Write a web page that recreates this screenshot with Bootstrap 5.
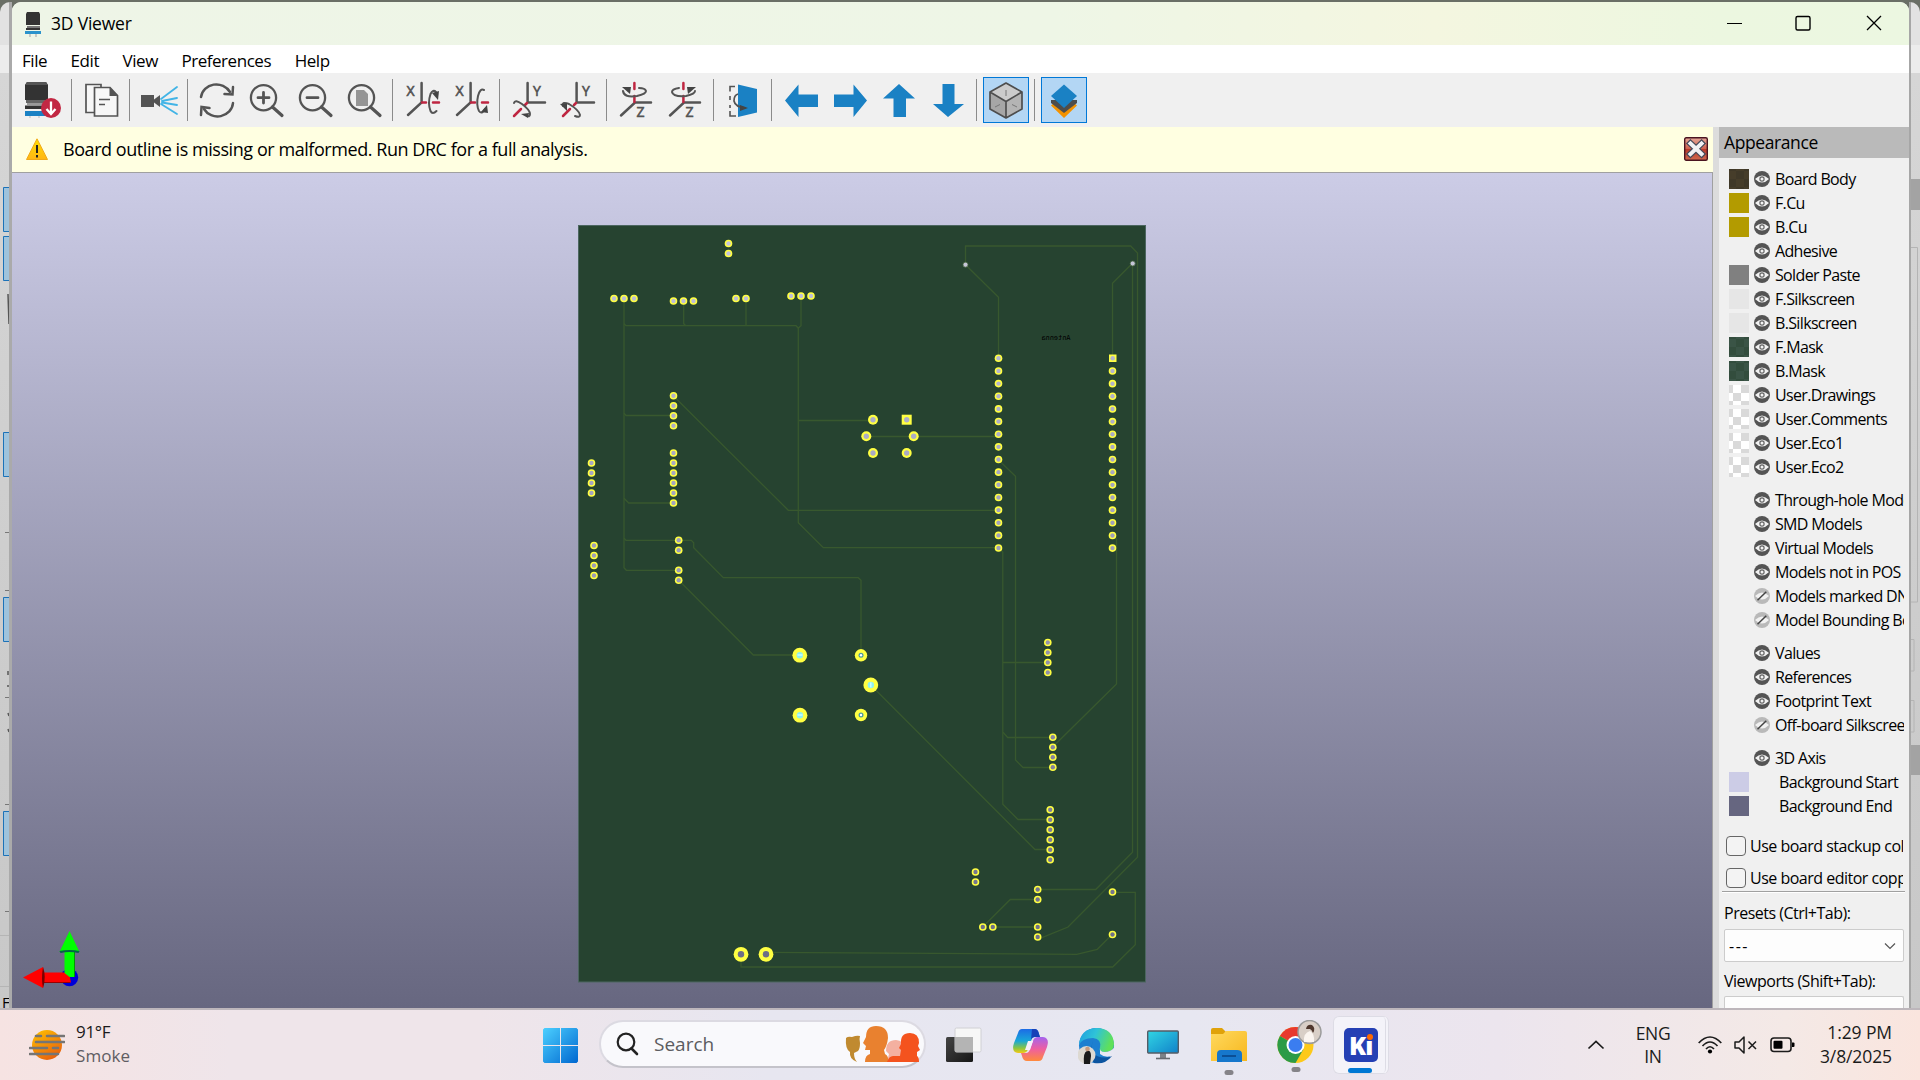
<!DOCTYPE html>
<html lang="en">
<head>
<meta charset="utf-8">
<title>3D Viewer</title>
<link href="https://cdn.jsdelivr.net/npm/bootstrap@5.3.0/dist/css/bootstrap.min.css" rel="stylesheet">
<style>
  body { width: 1920px; height: 1080px; overflow: hidden; background: #6a6f66; color: #000;
         font-family: "Open Sans", "Noto Sans", sans-serif; font-size: 17px; letter-spacing: -.45px; line-height: 1; white-space: nowrap; }
  svg { display: block; flex: none; }
  .desk { height: 1008px; padding-top: 2px; overflow: hidden; }
  .edge { flex: none; background: linear-gradient(#e2e2e2 43px, #ececec 43px 71px, #d6d6d6 71px, #cdcdcd 60%, #c8c8c8); }
  .edge-l { width: 12px; border-radius: 10px 0 0 0; border-right: 3px solid #aaa; }
  .edge-r { width: 11px; border-radius: 0 10px 0 0; border-left: 2px solid #a6a6a6; }
  .win { width: 1897px; flex: none; background: #f0f0f0; border-radius: 9px 9px 0 0; overflow: hidden; }
  .win > div { flex: none; }
  .titlebar { height: 43px; padding-left: 13px; background: linear-gradient(90deg, #eef5e7, #eef6e6 55%, #f4f6e0 75%, #ecf7e0 90%, #ecf7e1); }
  .win-title { margin-left: 8px; font-size: 17.5px; letter-spacing: -.2px; }
  .caption-btn { width: 70px; }
  .menubar { height: 28px; background: #fff; padding-left: 10px; gap: 23.5px; }
  .menubar span { position: relative; top: 1px; }
  .toolbar { height: 54px; padding-left: 6px; }
  .toolbar svg { overflow: visible; }
  .tool { width: 49px; height: 54px; flex: none; }
  .tool-on > span { width: 46px; height: 46px; background: #b3d6f4; border: 1px solid #0078d7; }
  .tool-sep { width: 9px; height: 54px; flex: none; }
  .tool-sep::before { content: ""; width: 1px; height: 42px; background: #8b8b8b; }
  .infobar { height: 45px; background: #ffffe1; padding: 0 5px 1px 14px; font-size: 18px; letter-spacing: -.44px; }
  .infobar .msg { margin-left: 15px; }
  .scene { width: 1701px; border-right: 1px solid #a0a0a0; border-top: 1px solid #a0a0a0; height: 836px; }
  .sash { width: 6px; background: #dcdcdc; }
  .side { width: 190px; font-size: 16px; letter-spacing: -.5px; }
  .side-head { height: 31px; background: #bababa; padding-left: 5px; font-size: 17.5px; letter-spacing: -.4px; }
  .layers { padding: 9px 0 0 10px; width: 185px; overflow: hidden; letter-spacing: -.65px; }
  .lay { height: 24px; }
  .lay + .lay-gap { margin-top: 9px; }
  .sw { width: 20px; height: 20px; margin-right: 5px; flex: none; }
  .sw-check { background: conic-gradient(#fff 25%, #d9d9d9 0 50%, #fff 0 75%, #d9d9d9 0) -4px 0/16px 16px; }
  .sw-brown { background: conic-gradient(#3f3828 25%, #463d2a 0 50%, #3f3828 0 75%, #463d2a 0) -1px 2px/16px 16px; }
  .sw-green { background: conic-gradient(#334d3d 25%, #3a5446 0 50%, #334d3d 0 75%, #3a5446 0) -1px 2px/16px 16px; }
  .chk { height: 32px; padding-left: 7px; width: 184px; overflow: hidden; }
  .chk .form-check-input { width: 20px; height: 20px; border: 1px solid #666; border-radius: 4px; margin: 0 4px 0 0; flex: none; background: #f3f3f3; }
  .rule { height: 2px; margin: -3px 4px 0 3px; background: #a0a0a0; border-bottom: 1px solid #fff; }
  .combo { width: 180px; height: 33px; margin-left: 5px; background: #fdfdfd; border: 1px solid #ccc; border-radius: 2px; padding: 0 7px 0 4px; }
  .taskbar { height: 72px; border-top: 2px solid #bdb6bb; letter-spacing: -.3px; color: #1b1b1b;
             background: linear-gradient(90deg, #f6e3e2 0, #efe5ea 12%, #efe5ea 25%, #e7e6f0 40%, #e7e7f1 62%, #ece5ee 78%, #f4e9e6 93%, #fae5de 100%); }
  .search { width: 327px; flex: none; height: 48px; border-radius: 24px; background: #f9f9fc; border: 2px solid #dcdae2; border-bottom-color: #c4c3ca; padding: 0 3px 0 14px; }
  .ki-tile { width: 56px; height: 58px; flex: none; border-radius: 6px; background: #f4f3f9; border: 1px solid #dddce5; border-right: 4px double #dddce5; position: relative; }
  .pip { width: 9px; height: 5px; border-radius: 3px; background: #858388; left: 50%; transform: translateX(-50%); bottom: -13px; }
  .pip-on { width: 24px; background: #0078d4; bottom: 0; }
  .tray-col { line-height: 24px; font-size: 17px; flex: none; }
</style>
<script src="https://cdn.jsdelivr.net/npm/bootstrap@5.3.0/dist/js/bootstrap.bundle.min.js"></script>
</head>
<body>
<svg width="0" height="0" class="position-absolute">
  <defs>
    <symbol id="eye" viewBox="0 0 16 16"><circle cx="8" cy="8" r="8" fill="#545454"/><path d="M1 8Q8 .8 15 8Q8 15.2 1 8z" fill="#f2f2f2"/><circle cx="8" cy="8" r="2.1" fill="none" stroke="#666" stroke-width="1.2"/></symbol>
    <symbol id="noeye" viewBox="0 0 16 16"><circle cx="8" cy="8" r="8" fill="#b9b9b9"/><path d="M1 8Q8 .8 15 8Q8 15.2 1 8z" fill="#f2f2f2"/><path d="M3.5 12.3L12.3 3.7" stroke="#444" stroke-width="1.5"/></symbol>
    <linearGradient id="bg" gradientUnits="userSpaceOnUse" x1="0" y1="173" x2="0" y2="1008"><stop offset="0" stop-color="#cccce6"/><stop offset="1" stop-color="#676780"/></linearGradient>
    <linearGradient id="winblue" x1="0" y1="0" x2="1" y2="1"><stop offset="0" stop-color="#4cd0ff"/><stop offset="1" stop-color="#0067d0"/></linearGradient>
    <linearGradient id="sun" x1="0" y1="0" x2=".6" y2="1"><stop offset="0" stop-color="#ffc400"/><stop offset="1" stop-color="#e9630c"/></linearGradient>
    <linearGradient id="amber" x1="0" y1="0" x2="0" y2="1"><stop offset="0" stop-color="#ffe000"/><stop offset="1" stop-color="#ffb515"/></linearGradient>
    <linearGradient id="cpA" x1="0" y1="0" x2="0" y2="1"><stop offset="0" stop-color="#1c6be6"/><stop offset=".5" stop-color="#19a8d8"/><stop offset=".8" stop-color="#8cc63f"/><stop offset="1" stop-color="#f6c915"/></linearGradient>
    <linearGradient id="cpB" x1="0" y1="0" x2="0" y2="1"><stop offset="0" stop-color="#a463ee"/><stop offset=".5" stop-color="#ee5fa0"/><stop offset="1" stop-color="#ff8a3c"/></linearGradient>
    <linearGradient id="edA" x1="0" y1="0" x2="1" y2=".3"><stop offset="0" stop-color="#1c9de0"/><stop offset=".5" stop-color="#2fc3d8"/><stop offset="1" stop-color="#5fe05a"/></linearGradient>
    <linearGradient id="scr" x1="0" y1="0" x2="1" y2="1"><stop offset="0" stop-color="#31d6e4"/><stop offset="1" stop-color="#1181c9"/></linearGradient>
    <linearGradient id="fold" x1="0" y1="0" x2="1" y2="1"><stop offset="0" stop-color="#ffd95e"/><stop offset="1" stop-color="#f7b71d"/></linearGradient>
    <linearGradient id="tvA" x1="0" y1="0" x2="1" y2="1"><stop offset="0" stop-color="#444"/><stop offset="1" stop-color="#161616"/></linearGradient>
    <linearGradient id="closeRed" x1="0" y1="0" x2="0" y2="1"><stop offset="0" stop-color="#e6a99a"/><stop offset=".5" stop-color="#cf5f4c"/><stop offset=".51" stop-color="#b8392a"/><stop offset="1" stop-color="#d06a50"/></linearGradient>
  </defs>
</svg>

<div class="desk d-flex">
  <div class="edge edge-l">
    <svg width="9" height="1006" viewBox="0 2 9 1006">
      <g fill="#9fc3dc" stroke="#1c72b8"><path d="M10 187.5H3.5v44H10zM10 236.5H3.5v44H10zM10 432.5H3.5v44H10zM10 597.5H3.5v44H10zM10 811.5H3.5v44H10z"/></g>
      <path d="M5 532.5h4M5 590.5h4M5 697.5h4M5 804.5h4M5 911.5h4" stroke="#777"/><path d="M0 935.5h9M0 986.5h9" stroke="#b5b5b5"/>
      <path d="M8 294l1 30M8 671v4M8 685v2M8 713l1 3M8 729l1 3" stroke="#555" stroke-width="1.5"/>
      <text x="2" y="1008" font-size="15" letter-spacing="0">F</text>
    </svg>
  </div>

  <div class="win d-flex flex-column">
    <div class="titlebar d-flex align-items-center">
      <svg width="18" height="26" viewBox="0 0 18 26"><path d="M2 1h12l1 2v11H1V3z" fill="#333"/><path d="M2 15h13v2H2z" fill="#777"/><path d="M1 17h14v2H1z" fill="#333"/><path d="M0 20h16v3H0z" fill="#2b93cc"/><path d="M5 23v3M11 23v3" stroke="#bbb" stroke-width="1.5"/></svg>
      <span class="win-title">3D Viewer</span>
      <div class="ms-auto d-flex">
        <svg class="caption-btn" height="20" viewBox="0 0 70 20"><path d="M28 9.5h15" stroke="#000" stroke-width="1.2"/></svg>
        <svg class="caption-btn" height="20" viewBox="0 0 70 20"><rect x="27" y="2.5" width="14" height="13.5" rx="1.5" fill="none" stroke="#000" stroke-width="1.4"/></svg>
        <svg class="caption-btn" height="20" viewBox="0 0 70 20"><path d="M28 2l14 14M42 2L28 16" stroke="#000" stroke-width="1.3"/></svg>
      </div>
    </div>

    <div class="menubar d-flex align-items-center"><span>File</span><span>Edit</span><span>View</span><span>Preferences</span><span>Help</span></div>

    <div class="toolbar d-flex align-items-center" id="toolbar"></div>

    <div class="d-flex">
      <div>
        <div class="infobar d-flex align-items-center">
          <svg width="22" height="23" viewBox="0 0 22 23"><path d="M11 .8L21.5 21.5H.5z" fill="url(#amber)" stroke="#f0a818" stroke-linejoin="round"/><path d="M11 7v8M11 17v2.4" stroke="#222" stroke-width="2"/></svg>
          <span class="msg">Board outline is missing or malformed. Run DRC for a full analysis.</span>
          <svg class="ms-auto" width="24" height="24" viewBox="0 0 24 24"><rect x=".7" y=".7" width="22.6" height="22.6" rx="1.5" fill="url(#closeRed)" stroke="#4a1420" stroke-width="1.4"/><path d="M6.5 6.5l11 10.5M17.5 6.5l-11 10.5" stroke="#454a5a" stroke-width="6.5" stroke-linecap="square"/><path d="M6.5 6.5l11 10.5M17.5 6.5l-11 10.5" stroke="#f1f1f4" stroke-width="4" stroke-linecap="square"/></svg>
        </div>
        <div class="scene"><svg id="scene" width="1700" height="835" viewBox="12 173 1700 835"></svg></div>
      </div>
      <div class="sash"></div>
      <div class="side">
        <div class="side-head d-flex align-items-center">Appearance</div>
        <div class="layers" id="layers"></div>
        <div style="height:12px"></div>
        <div class="chk d-flex align-items-center"><input type="checkbox" class="form-check-input"><span>Use board stackup colors</span></div>
        <div class="chk d-flex align-items-center"><input type="checkbox" class="form-check-input"><span>Use board editor copper colors</span></div>
        <div class="rule"></div>
        <div class="d-flex align-items-center" style="height:36px;padding:4px 0 0 5px">Presets (Ctrl+Tab):</div>
        <div class="combo d-flex align-items-center justify-content-between"><span style="letter-spacing:1.5px">---</span>
          <svg width="12" height="8" viewBox="0 0 12 8"><path d="M1 1.5l5 5 5-5" fill="none" stroke="#555" stroke-width="1.2"/></svg></div>
        <div class="d-flex align-items-center" style="height:34px;padding:4px 0 0 5px">Viewports (Shift+Tab):</div>
        <div class="combo" style="height:14px;border-bottom:0"></div>
      </div>
    </div>
  </div>

  <div class="edge edge-r">
    <svg width="9" height="1006" viewBox="0 2 9 1006"><path d="M0 179h9v31H0zM0 745h9v30H0z" fill="#a3a3a3"/><path d="M0 247.5h6.5V602H0M0 639.5h3V671H0M0 700.5h3V732H0" fill="none" stroke="#b4b4b4"/></svg>
  </div>
</div>

<div class="taskbar d-flex align-items-center">
  <svg width="36" height="32" viewBox="0 0 36 32" style="margin-left:29px"><circle cx="18" cy="16" r="15" fill="url(#sun)"/><path d="M7 7h5M18 7h17M7 13h28M1 19h17M24 19h5M1 25h28" stroke="#757575" stroke-width="2.6" stroke-linecap="round"/></svg>
  <div class="tray-col" style="margin:-3px 0 0 11px;width:467px">91°F<br><span style="color:#5f5d62;letter-spacing:.1px">Smoke</span></div>
  <svg width="35" height="35" viewBox="0 0 35 35"><g fill="url(#winblue)"><path d="M1.5 0H17v17H0V1.5zM18 0h15.500L35 1.500V17H18zM0 18h17v17H1.500L0 33.500zM18 18h17v15.500L33.500 35H18z"/></g></svg>
  <div class="search d-flex align-items-center" style="margin:-2px 0 0 21px">
    <svg width="24" height="24" viewBox="0 0 24 24"><circle cx="11" cy="10" r="8.3" fill="none" stroke="#222" stroke-width="2.2"/><path d="M16.5 16.5l5.5 5.500" stroke="#222" stroke-width="2.6" stroke-linecap="round"/></svg>
    <span style="margin-left:15px;color:#5c5c60;font-size:19px;letter-spacing:0">Search</span>
    <svg class="ms-auto" width="76" height="38" viewBox="0 0 76 38"><path d="M1 13q2-2 6-1 5-2 8-1-1 3 0 7 0 6-2 8l-4 2q0 6 3 9-8-3-7-10-5-3-4-14z" fill="#c08a30"/><path d="M42 37l2-8-3-3q0-11 10-11 8 0 8 10l2 12z" fill="#f4b0a0"/><path d="M20 37q0-7 5-8v-4h-5l1-4-3-3 3-6Q21 1 31 1q12 0 12 12-1 8-4 12l1 4q4 2 3 8z" fill="#e9812f"/><path d="M42 37q2-6 6-6h7l1-6-2-2 2-4q-1-11 9-11 9 0 9 10l-1 3 2 4-3 2v4q2 1 2 6z" fill="#f4531e"/></svg>
  </div>
  <svg width="36" height="36" viewBox="0 0 36 36" style="margin-left:20px"><rect x="0" y="10" width="27" height="25" rx="1.5" fill="url(#tvA)"/><rect x="9" y="1" width="26" height="24" rx="1.5" fill="#f7f7f7" stroke="#d0d0d4"/><path d="M9 10h18v15H9z" fill="#b4b4b4"/></svg>
  <svg width="35" height="32" viewBox="0 0 35 32" style="margin-left:31px"><path d="M9 0h12q4 0 5 5l1 3h-5q-3 0-4 4l-3 8q-1 4-5 4H5Q-2 23 1 14L5 4Q6 0 9 0z" fill="url(#cpA)"/><path d="M26 32H14q-4 0-5-5l-1-3h5q3 0 4-4l3-8q1-4 5-4h5q7 1 4 10l-4 10q-1 4-4 4z" fill="url(#cpB)"/><path d="M19 0h3q3 0 4 5l1 3h-5q-3 0-4 3z" fill="#1641b8"/><path d="M15 12h5l-3 9h-5z" fill="#f6f0fa"/></svg>
  <svg width="37" height="37" viewBox="0 0 37 37" style="margin-left:30px"><circle cx="18.5" cy="18.5" r="17.5" fill="#1d7fd0"/><path d="M1 18Q2 2 18 1q17 0 18 16 0 8-9 8-7 0-5-4 2-9-7-10Q4 11 1 18z" fill="url(#edA)"/><path d="M15 14q-4 10 4 15 8 3 15 0-7 9-18 7-6-8-1-22z" fill="#0d55a0"/><path d="M22 20q-1 5 5 5 5 0 9-4v7q-8 4-14-1z" fill="#e8e8f2"/><circle cx="8.5" cy="28" r="9" fill="#ddd9d2"/><path d="M6 37q-1-12 3-13t4 5l-1 8z" fill="#1a1a1a"/><circle cx="9.5" cy="22" r="2.3" fill="#c49a80"/></svg>
  <svg width="32" height="30" viewBox="0 0 32 30" style="margin-left:32px"><path d="M13 22h6v6h-6z" fill="#7c8288"/><path d="M9 28.5h14" stroke="#666a70" stroke-width="1.6"/><rect x=".7" y="1" width="30.6" height="22" rx="1" fill="url(#scr)" stroke="#555c66" stroke-width="1.4"/></svg>
  <div class="position-relative" style="margin-left:32px"><svg width="36" height="34" viewBox="0 0 36 34"><path d="M0 2q0-2 2-2h9l4 4v4H0z" fill="#e0a20a"/><path d="M0 6h12l3-3h19q2 0 2 2v28H0z" fill="url(#fold)"/><path d="M6 34V26q0-4 4-4h16q5 0 5 4v8z" fill="#1677cc"/><path d="M11 28h14" stroke="#0b4f96" stroke-width="2"/></svg><span class="pip position-absolute"></span></div>
  <div class="position-relative" style="margin-left:30px"><svg width="45" height="43" viewBox="0 0 45 43" style="margin-top:-7px"><g transform="translate(18.5 25)"><circle r="18" fill="#fdc91a"/><path d="M0 0L-15.6-9A18 18 0 0 1 15.6-9z" fill="#e8392f"/><path d="M0 0L-15.6-9A18 18 0 0 0 0 18L7.8 4.5z" fill="#2c9b46"/><circle r="9" fill="#fff"/><circle r="7" fill="#3b7df0"/></g><circle cx="32.5" cy="12" r="11.5" fill="#d9cfc7" stroke="#9b9b9b" stroke-width="1.5"/><path d="M27 22q-1-9 6-11 5 3 4 11z" fill="#fbf5f0"/><path d="M29 9q1-5 6-4 4 3 1 8-1-3-3-4z" fill="#50382e"/></svg><span class="pip position-absolute" style="left:18.5px;bottom:-9px"></span></div>
  <div class="ki-tile" style="margin-left:11px"><svg width="34" height="34" viewBox="0 0 34 34" style="margin:11px 0 0 10px"><rect width="34" height="34" rx="5" fill="#2540b4"/><text x="5" y="27" font-family="Open Sans, sans-serif" font-weight="800" font-size="25" letter-spacing="-1" fill="#fff">Kı</text><circle cx="26" cy="9" r="3" fill="#ff6a00"/></svg><span class="pip pip-on position-absolute"></span></div>
  <svg width="18" height="10" viewBox="0 0 18 10" style="margin-left:198px"><path d="M1.5 8.5L9 1.5l7.500 7" fill="none" stroke="#1b1b1b" stroke-width="1.7"/></svg>
  <div class="tray-col text-center" style="margin-left:29px;width:38px;line-height:23px;font-size:17.5px">ENG<br>IN</div>
  <svg width="24" height="18" viewBox="0 0 24 18" style="margin-left:26px"><g fill="none" stroke="#1b1b1b" stroke-width="1.7"><path d="M.7 7Q12-5 23.3 7"/><path d="M4.500 10Q12 2 19.500 10" /><path d="M8 13Q12 8.500 16 13"/></g><circle cx="12" cy="15.5" r="2.1"/></svg>
  <svg width="24" height="18" viewBox="0 0 24 18" style="margin-left:12px"><path d="M1 6h4l5-5v16l-5-5H1z" fill="none" stroke="#1b1b1b" stroke-width="1.5" stroke-linejoin="round"/><path d="M14.5 5.5l7.500 7.500M22 5.500L14.500 13" stroke="#1b1b1b" stroke-width="1.5"/></svg>
  <svg width="25" height="16" viewBox="0 0 25 16" style="margin-left:12px"><rect x="1" y="1" width="20" height="13.5" rx="3" fill="none" stroke="#1b1b1b" stroke-width="1.6"/><rect x="3.5" y="3.8" width="9" height="8" rx="1"/><path d="M22 5.500h1.500q1 0 1 1v2.500q0 1-1 1H22z"/></svg>
  <div class="tray-col text-end ms-auto" style="margin:-3px 28px 0 0;font-size:17.5px;letter-spacing:-.1px">1:29 PM<br>3/8/2025</div>
</div>

<script>
  // ---- toolbar icons, each on a 36 x 36 grid ----
  const G = '#545454', R = '#bf2641', B = '#1a81c4';
  const lens = inner => `<g fill="none" stroke="${G}" stroke-width="2.3"><circle cx="15.5" cy="15.7" r="12.6"/></g><path d="M24.5 25l9.5 8.500" stroke="${G}" stroke-width="3.2" stroke-linecap="round"/>${inner}`;
  const ln = (d, c, w = 2.5) => `<path d="${d}" fill="none" stroke="${c}" stroke-width="${w}" stroke-linecap="round"/>`;
  const lt = (t, x, y) => `<text x="${x}" y="${y}" font-family="Open Sans, sans-serif" font-size="14" letter-spacing="0" fill="${G}" stroke="${G}" stroke-width=".6">${t}</text>`;
  const tri = p => `<polygon points="${p}" fill="#444"/>`;
  const arrow = p => `<polygon points="${p}" fill="${B}"/>`;
  const I = {
    exp: `<path d="M2 0h19l2 3v15H0V3z" fill="#333"/><path d="M2 0h19l2 3H0z" fill="#555"/><path d="M1 18h22v3H1z" fill="#666"/><path d="M2 21h20v2H2z" fill="#999"/><path d="M0 23.500h22V27H0z" fill="#333"/><path d="M0 29h20v5H0z" fill="${B}"/><path d="M5 34v2M14 34v2" stroke="#bbb"/><circle cx="26" cy="26" r="10" fill="#c22743"/><path d="M26 19.500v11M21.500 27l4.500 5 4.500-5" fill="none" stroke="#fff" stroke-width="2.3"/>`,
    copy: `<g fill="#f7f7f7" stroke="${G}" stroke-width="1.7"><path d="M3 2.500h15v28H3z"/><path d="M11.500 5.500h15.500l7.500 8v20.500H11.500z"/></g><path d="M26.500 5l8 9h-8z" fill="${G}"/><path d="M16 17.500h11M16 22.500h6" stroke="${G}" stroke-width="1.5"/>`,
    cam: `<path d="M0 13h13v12H0z" fill="${G}"/><path d="M11 19l8-6v12z" fill="${G}"/>${ln('M20 17L36 5M21 19l15-3M21 20.500l15 2.500M20 22l16 10', '#42b4e6', 1.8)}`,
    ref: ln('M2 15A15.500 14.500 0 0 1 31 10M34 21A15.500 14.500 0 0 1 5 27', G, 2.5) + ln('M34 5l-.5 7.500-8-.5M2 33l.5-8 8 1', G, 2.5),
    zi: lens(ln('M15.500 10.500v10.500M10 15.700h11', G, 2.8)), zo: lens(ln('M10 15.700h11', G, 2.8)),
    zf: lens('<path d="M10 8h8l4 4v12H10z" fill="#959595"/>'),
    xa: lt('X', 2.5, 14) + ln('M17.600 1v19.500L4 33', G) + ln('M18 20.500h4M29 20.500h6', R) + ln('M32 10q-3-3-5.500 2-3 9 0 17 2 4 6 0', G, 2) + tri('28,11 35,9 34,18'),
    xb: lt('X', 2.5, 14) + ln('M17.600 1v19.500L4 33', G) + ln('M18 20.500h4M29 20.500h6', R) + ln('M31 8q-4-2-6 6-2 9 1 15 3 4 6-2', G, 2) + tri('28,30 34,23 35,31'),
    ya: lt('Y', 22, 14) + ln('M16.600 1v19.500H34', G) + ln('M16 21l-2 2M10 27l-7 7', R) + ln('M3 21q1-4 8 1 8 6 8 10t-4 1', G, 2) + tri('10,32 18,31 17,36'),
    yb: lt('Y', 22, 14) + ln('M16.600 1v19.500H34', G) + ln('M16 21l-2 2M10 27l-7 7', R) + ln('M3 24q-1-5 6-2 10 6 11 11 0 3-5 1', G, 2) + tri('0,22 7,21 7,29'),
    za: lt('Z', 18.5, 35) + ln('M33 20.500H17L3 33.500', G) + ln('M16.400 1v6M16.400 14v6', R) + ln('M5 9q1 7 14 5 9-2 9-5-1-3-7-3', G, 2) + tri('4,5 13,5 12,12'),
    zb: lt('Z', 18.5, 35) + ln('M33 20.500H17L3 33.500', G) + ln('M16.400 1v6M16.400 14v6', R) + ln('M12 6q-7 1-7 4 1 5 14 4 9-2 9-5', G, 2) + tri('20,5 29,5 21,12'),
    flip: `<path d="M13 2.500L32 7v23.500L13 35z" fill="${B}"/><path d="M10 4.500H5v5M5 14v4M5 23v3M5 29v5h6" fill="none" stroke="${G}" stroke-width="1.6"/><path d="M13 12q-4 1-4 7 1 6 12 7" fill="none" stroke="${G}" stroke-width="1.7"/>` + tri('15,23 23,26 15,29'),
    l: arrow('2,18.500 15.500,2.500 15.500,12.500 35,12.500 35,25 15.500,25 15.500,35'),
    r: arrow('35,18.500 21.500,2.500 21.500,12.500 2,12.500 2,25 21.500,25 21.500,35'),
    u: arrow('18,2 34,16.500 25,16.500 25,35 12.500,35 12.500,16.500 2,16.500'),
    d: arrow('18,35 34,22 24.500,22 24.500,2 12.500,2 12.500,22 3,22'),
    cube: `<path d="M18 1l16 9v17L18 36 2 27V10z" fill="#b4b4b4"/><path d="M18 1l16 9-16 9.500L2 10z" fill="#cbcbcb"/><path d="M2 10l16 9.500V36L2 27z" fill="#a6a6a6"/><path d="M18 1l16 9v17L18 36 2 27V10zM2 10l16 9.500L34 10M18 19.500V36" fill="none" stroke="#4e4e4e" stroke-width="1.7" stroke-linejoin="round"/><path d="M18 8v6M7 25l5-2.500M29 25l-5-2.500" stroke="#777"/>`,
    lay: `<path d="M5 23.500l3-2.500 10 8.500 10-8.500 3 2.500L18 36z" fill="#f39200"/><path d="M5 18h26v3L18 31 5 21z" fill="#4d4d4d"/><path d="M18 2.500L31 14 18 26 5 14z" fill="${B}"/>`
  };
  document.getElementById('toolbar').innerHTML = 'exp | copy | cam | ref zi zo zf | xa xb | ya yb | za zb | flip | l r u d | cube* | lay*'.split(' ').map(k => {
    if (k === '|') return '<div class="tool-sep d-flex align-items-center justify-content-center"></div>';
    const on = k.endsWith('*'), n = k.replace('*', '');
    return `<div class="tool d-flex align-items-center justify-content-center ${on ? 'tool-on' : ''}"><span class="d-flex align-items-center justify-content-center"><svg width="36" height="36" viewBox="0 0 36 36">${I[n]}</svg></span></div>`;
  }).join('');

  // ---- appearance panel rows: label, swatch, visibility, extra gap ----
  const rows = [
    ['Board Body', 'sw-brown', 1], ['F.Cu', '#b39b00', 1], ['B.Cu', '#b39b00', 1], ['Adhesive', '', 1], ['Solder Paste', '#808080', 1],
    ['F.Silkscreen', '#e6e6e6', 1], ['B.Silkscreen', '#e6e6e6', 1], ['F.Mask', 'sw-green', 1], ['B.Mask', 'sw-green', 1],
    ['User.Drawings', 'sw-check', 1], ['User.Comments', 'sw-check', 1], ['User.Eco1', 'sw-check', 1], ['User.Eco2', 'sw-check', 1],
    ['Through-hole Models', '', 1, 1], ['SMD Models', '', 1], ['Virtual Models', '', 1], ['Models not in POS File', '', 1],
    ['Models marked DNP', '', 0], ['Model Bounding Boxes', '', 0], ['Values', '', 1, 1], ['References', '', 1], ['Footprint Text', '', 1],
    ['Off-board Silkscreen', '', 0], ['3D Axis', '', 1, 1], ['Background Start', '#cccce6', 2], ['Background End', '#666680', 2]];
  document.getElementById('layers').innerHTML = rows.map(([t, s, v, g]) =>
    `<div class="lay ${g ? 'lay-gap' : ''} d-flex align-items-center"><span class="sw ${s[0] === 's' ? s : ''}"${s[0] === '#' ? ` style="background:${s}"` : ''}></span>` +
    (v === 2 ? '<span style="width:25px;flex:none"></span>' : `<svg width="16" height="16" style="margin-right:5px"><use href="#${v ? 'eye' : 'noeye'}"/></svg>`) + `<span>${t}</span></div>`).join('');

  // ---- board scene ----
  const traces = [
    '624 298 624 567.700 626.300 570.300 678.500 570.300', '624 323.700 626 325.700 796 325.700 798.300 328 801 325.700 801 296',
    '798.300 328 798.300 522.700 823.300 547.700 998 547.700', '683.700 301 683.700 323.700 685.700 325.700', '746 298 746 325.700',
    '624 413.300 626 415.500 673 415.500', '673.300 395.700 788.300 510.300 998 510.300', '624 498.300 628.700 503 673 503',
    '624 538.300 626 540.300 691.300 540.300 693.700 542.700 693.700 547.700 723.300 577.700 858.300 577.700 861 580.300 861 655',
    '678.700 580.300 753.300 655 800 655', '798.300 420.500 873 420.500',
    '965.500 264.700 965.500 246 1130.700 246 1137.500 253 1137.500 857.300 1068 927 1042 937.700',
    '965.500 264.700 998.500 297.300 998.500 358', '1132.500 263.300 1112.500 283.300 1112.500 358',
    '1132.500 263.300 1132.500 852.300 1095.700 889.500 1037.700 889.500', '866.300 436.500 998 436.500',
    '998.300 459.700 1015.500 476.300 1015.500 760 1023 767.500 1052.700 767.500', '998 547.700 1002.800 552 1002.800 804.300 1018 819.500 1050 819.500',
    '1113 535 1116.500 539 1116.500 684 1052.700 747', '1003 662.500 1047 662.500', '1003 732.300 1007.700 737.500 1052 737.500',
    '870.700 685 1035 849.500 1050 849.500', '982.700 927 1010.300 899.500 1037 899.500', '992 927 1037 927',
    '1112.300 892.300 1135.300 892.300 1135.300 944.700 1112.700 967 741 967 741 954', '766 952.300 1076.700 954.300 1097.300 949.300 1112.300 934.300'];
  const small = [[728.5,243.5],[728.5,253.5],[614,298.5],[624,298.5],[634,298.5],[673.5,301],[683.5,301],[693.5,301],[736,298.5],[746,298.5],
    [791,296],[801,296],[811,296],[975.5,872],[975.5,882],[1037.7,889.5],[1037.7,899.5],[1037.7,927],[1037.7,937],[982.8,927],[992.8,927],[1112.5,892],[1112.5,934.5]];
  const col = (x, y, n, p = 10) => { for (let i = 0; i < n; i++) small.push([x, y + i * p]); };
  col(673.5, 395.7, 4); col(673.5, 453, 6); col(591.5, 463, 4); col(594, 545.5, 4); col(678.7, 540.3, 2); col(678.7, 570.3, 2);
  col(998.5, 358.3, 16, 12.65); col(1112.5, 371, 15, 12.65); col(1047.8, 642.5, 4); col(1052.8, 737.3, 4); col(1050.2, 809.7, 6);
  const Y = '#ffff42', ring = (x, y, r, h, f = 'url(#bg)') => `<circle cx="${x}" cy="${y}" r="${r}" fill="${Y}"/><circle cx="${x}" cy="${y}" r="${h}" fill="${f}"/>`;
  let s = '<rect x="12" y="173" width="1700" height="835" fill="url(#bg)"/><rect x="578.5" y="225.5" width="567" height="756.5" fill="#264330" stroke="#4c6660"/>';
  s += '<g fill="none" stroke="#38582e" stroke-width="1.3">' + traces.map(t => `<polyline points="${t}"/>`).join('') + '</g>';
  s += small.map(p => ring(p[0], p[1], 3.8, 2.2)).join('');
  s += `<rect x="1109" y="354.5" width="7.5" height="7.5" fill="${Y}"/><circle cx="1112.7" cy="358.3" r="2.3" fill="url(#bg)"/><rect x="901.7" y="414.7" width="10" height="10" fill="${Y}"/><circle cx="906.7" cy="419.7" r="2.7" fill="url(#bg)"/>`;
  s += [[873,419.7],[866.3,436.3],[913.7,436.3],[873,453],[906.7,453]].map(p => ring(p[0], p[1], 5, 2.7)).join('');
  s += [[799.8,655.2],[870.8,685],[800,715.2]].map(p => ring(p[0], p[1], 7.4, 3.2, '#8ff0f0')).join('');
  s += [[861,655.3],[861,715]].map(p => ring(p[0], p[1], 6.2, 2.5, '#4c9aa0') + `<circle cx="${p[0]}" cy="${p[1]}" r="1.2" fill="#fff"/>`).join('');
  s += '<path d="M797.500 655h5M797.500 715h5M870.800 682.500v5" stroke="#c8fbff" stroke-width="1.5"/>';
  s += ring(741, 954.3, 7.4, 3.2) + ring(766, 954.3, 7.4, 3.2);
  s += '<g fill="#c6c6d8" stroke="#4b6a44" stroke-width=".8"><circle cx="965.5" cy="264.7" r="2.5"/><circle cx="1132.7" cy="263.5" r="2.5"/></g>';
  s += '<text transform="translate(1070.5 339.5) scale(-1 1)" font-family="DejaVu Sans Mono, monospace" font-size="7" letter-spacing="0" textLength="29" fill="#000">Antenna</text>';
  // axis gizmo
  s += '<circle cx="69.5" cy="977.5" r="8.7" fill="#0000d8"/><path d="M43 972.500h26l2 10H43z" fill="#f00"/><path d="M43 982.500h27" stroke="#900"/><path d="M23 977.500L43 967q2.500 10 0 21z" fill="#f00"/><path d="M43 967q3.500 10 0 21-2-10 0-21z" fill="#700"/><path d="M64.500 951h10v26l-5 0-5-4z" fill="#0f0"/><path d="M74.500 951v26" stroke="#090"/><path d="M69.500 931l10 21H59.500z" fill="#0f0"/><path d="M59.500 951q10-2 20 0l-1 2q-9-2-18 0z" fill="#064"/>';
  document.getElementById('scene').innerHTML = s;
</script>
</body>
</html>
